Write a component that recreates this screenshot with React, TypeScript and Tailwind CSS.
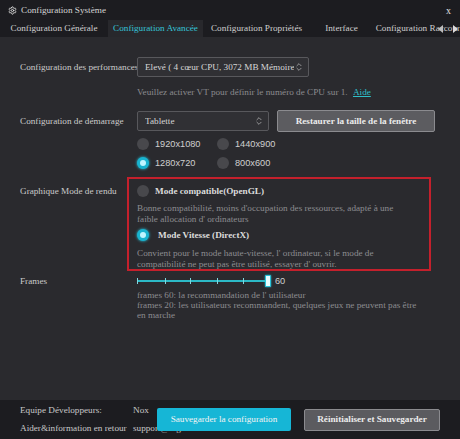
import { Settings, ChevronsUpDown } from 'lucide-react';

const font = { fontFamily: '"Liberation Serif", "DejaVu Serif", serif' };

function Radio({ checked }: { checked?: boolean }) {
  return checked ? (
    <span className="w-[12px] h-[12px] rounded-full bg-[#18b3cf] flex items-center justify-center shrink-0 shadow-[0_0_3px_#27d3ef]">
      <span className="w-[6px] h-[6px] rounded-full bg-[#bff6ff]" />
    </span>
  ) : (
    <span className="w-[12px] h-[12px] rounded-full bg-[#48484c] shrink-0" />
  );
}

function Select({ value, width }: { value: string; width: string }) {
  return (
    <div
      className={`${width} h-[20px] border border-[#58585c] bg-[#303034] rounded-[2px] flex items-center pl-[7px] pr-[4px] text-[#d6d6d6]`}
    >
      <span className="flex-1 overflow-hidden whitespace-nowrap">{value}</span>
      <ChevronsUpDown className="w-[10px] h-[10px] text-[#cfcfcf] shrink-0" strokeWidth={1.5} />
    </div>
  );
}

const tabs = [
  { label: 'Configuration Générale', w: 'w-[108px]' },
  { label: 'Configuration Avancée', w: 'w-[95px]', active: true },
  { label: 'Configuration Propriétés', w: 'w-[107px]' },
  { label: 'Interface', w: 'w-[63px]' },
  { label: 'Configuration Raccourcis', w: 'w-[100px]' },
];

export default function App() {
  return (
    <div
      className="w-[460px] h-[439px] bg-[#1c1c20] flex flex-col text-[9.2px] leading-[11px] text-[#cbcbcb] overflow-hidden"
      style={font}
    >
      {/* Title bar */}
      <div className="h-[20px] flex items-center pl-[8px] pr-[9px]">
        <Settings className="w-[9px] h-[9px] text-[#d8d8d8]" strokeWidth={2.5} />
        <span className="ml-[4px] flex-1 text-[#d4d4d4]">Configuration Système</span>
        <span className="text-[#e0e0e0] text-[10px]">x</span>
      </div>

      {/* Tabs */}
      <div className="h-[17px] flex relative overflow-hidden whitespace-nowrap">
        {tabs.map((t) => (
          <div
            key={t.label}
            className={`${t.w} shrink-0 flex items-center justify-center ${
              t.active ? 'bg-[#28282c] text-[#35c3d6]' : 'text-[#cfcfcf]'
            }`}
          >
            {t.label}
          </div>
        ))}
        <div className="absolute right-0 top-0 h-full w-[24px] flex items-center justify-between pl-[2px] pr-[2px]">
          <span className="w-0 h-0 border-y-[4px] border-y-transparent border-r-[5px] border-r-[#bdbdbd]" />
          <span className="w-0 h-0 border-y-[4px] border-y-transparent border-l-[5px] border-l-[#dcdcdc]" />
        </div>
      </div>

      {/* Content */}
      <div className="flex-1 bg-[#2a2a2e] pl-[20px] pt-[20px] flex flex-col">
        <div className="flex items-center">
          <div className="w-[117px] pr-[4px] whitespace-nowrap overflow-hidden">Configuration des performances</div>
          <Select value="Elevé ( 4 cœur CPU, 3072 MB Mémoire interne )" width="w-[172px]" />
        </div>
        <div className="ml-[117px] mt-[10px] text-[#8a8a8e] whitespace-nowrap">
          Veuillez activer VT pour définir le numéro de CPU sur 1.{' '}
          <span className="text-[#2fbfc9] underline ml-[3px]">Aide</span>
        </div>

        <div className="flex items-center mt-[12px]">
          <div className="w-[117px]">Configuration de démarrage</div>
          <Select value="Tablette" width="w-[132px]" />
          <button className="ml-[8px] w-[158px] h-[22px] bg-[#5c5c60] border border-[#8b8b8f] rounded-[2px] text-[#ececec] font-bold">
            Restaurer la taille de la fenêtre
          </button>
        </div>

        <div
          className="ml-[117px] mt-[6px] grid grid-cols-[80px_80px] gap-y-[7px] text-[#d0d0d0]"
          style={{ fontFamily: '"Liberation Sans", sans-serif' }}
        >
          <div className="flex items-center gap-[6px]"><Radio />1920x1080</div>
          <div className="flex items-center gap-[6px]"><Radio />1440x900</div>
          <div className="flex items-center gap-[6px]"><Radio checked />1280x720</div>
          <div className="flex items-center gap-[6px]"><Radio />800x600</div>
        </div>

        <div className="flex mt-[8px]">
          <div className="w-[107px] pt-[9px]">Graphique Mode de rendu</div>
          <div className="w-[304px] h-[94px] border-2 border-[#c4202c] pl-[8px] pt-[6px] flex flex-col">
            <div className="flex items-center gap-[6px]">
              <Radio />
              <span className="font-bold text-[#dcdcdc]">Mode compatible(OpenGL)</span>
            </div>
            <div className="mt-[6px] text-[#8c8c90] whitespace-nowrap">
              Bonne compatibilité, moins d'occupation des ressources, adapté à une
              <br />
              faible allocation d' ordinateurs
            </div>
            <div className="flex items-center gap-[9px] mt-[4px]">
              <Radio checked />
              <span className="font-bold text-[#dcdcdc]">Mode Vitesse (DirectX)</span>
            </div>
            <div className="mt-[7px] text-[#8c8c90] whitespace-nowrap">
              Convient pour le mode haute-vitesse, l' ordinateur, si le mode de
              <br />
              compatibilité ne peut pas être utilisé, essayer d' ouvrir.
            </div>
          </div>
        </div>

        <div className="flex items-center mt-[4px]">
          <div className="w-[117px]">Frames</div>
          <div className="w-[128px] h-[12px] flex items-center relative">
            <div className="w-full h-[2px] bg-[#2cb9c6]" />
            {[0, 28, 53, 80, 106].map((x) => (
              <span key={x} className="absolute top-[3px] w-[1px] h-[6px] bg-[#7fd7de]" style={{ left: x }} />
            ))}
          </div>
          <span className="w-[6px] h-[12px] bg-[#eaffff] border border-[#27c2d8] rounded-[1px] shadow-[0_0_2px_#27c2d8]" />
          <span className="ml-[4px] text-[#d0d0d0]" style={{ fontFamily: '"Liberation Sans", sans-serif' }}>60</span>
        </div>
        <div className="ml-[117px] mt-[3px] text-[#8c8c90] leading-[10px] whitespace-nowrap">
          frames 60: la recommandation de l' utilisateur
          <br />
          frames 20: les utilisateurs recommandent, quelques jeux ne peuvent pas être
          <br />
          en marche
        </div>
      </div>

      {/* Footer */}
      <div className="h-[39px] flex items-center pl-[20px] shrink-0">
        <div className="w-[137px] shrink-0 flex flex-col gap-[7px] whitespace-nowrap text-[#c8c8c8]">
          <div className="flex">
            <span className="w-[113px] shrink-0">Equipe Développeurs:</span>
            <span>Nox</span>
          </div>
          <div className="flex">
            <span className="w-[113px] shrink-0">Aider&amp;information en retour</span>
            <span>support@bignox.com</span>
          </div>
        </div>
        <button className="w-[134px] h-[23px] bg-[#16b6d6] text-[#f4f4f4] rounded-[2px] relative">
          Sauvegarder la configuration
        </button>
        <button className="ml-[13px] w-[136px] h-[22px] bg-[#5b5b5f] border border-[#8b8b8f] rounded-[2px] text-[#ececec] font-bold">
          Réinitialiser et Sauvegarder
        </button>
      </div>
    </div>
  );
}
